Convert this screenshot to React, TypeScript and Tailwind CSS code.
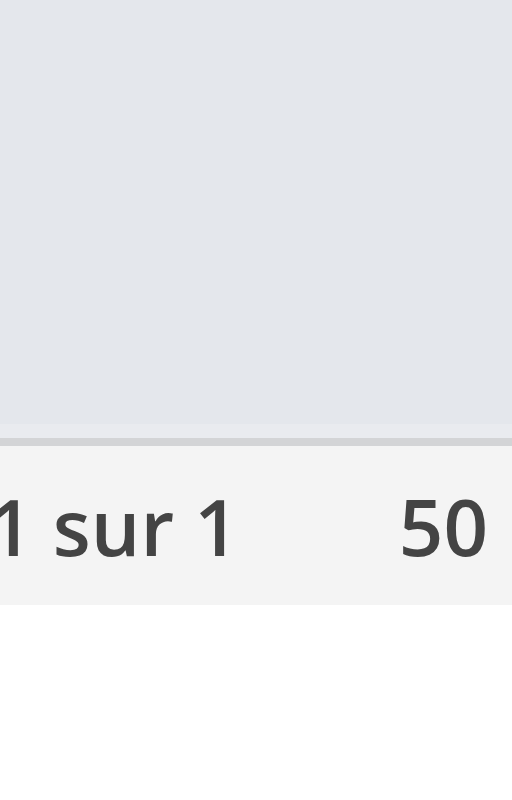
export default function App() {
  return (
    <div className="w-[512px] h-[800px] overflow-hidden bg-white" style={{ fontFamily: '"Open Sans", "Liberation Sans", sans-serif' }}>
      <div className="h-[424px] bg-[#e4e7ec]" />
      <div className="h-[14px] bg-[#e9ebef]" />
      <div className="h-[8px] bg-[#d3d4d6]" />
      <div className="h-[159px] bg-[#f4f4f4] flex items-center justify-between overflow-hidden">
        <span className="-ml-[12px] text-[78px] font-semibold leading-none text-[#444444] whitespace-nowrap">1 sur 1</span>
        <span className="mr-[24px] text-[78px] font-semibold leading-none text-[#444444] whitespace-nowrap">50</span>
      </div>
    </div>
  );
}
